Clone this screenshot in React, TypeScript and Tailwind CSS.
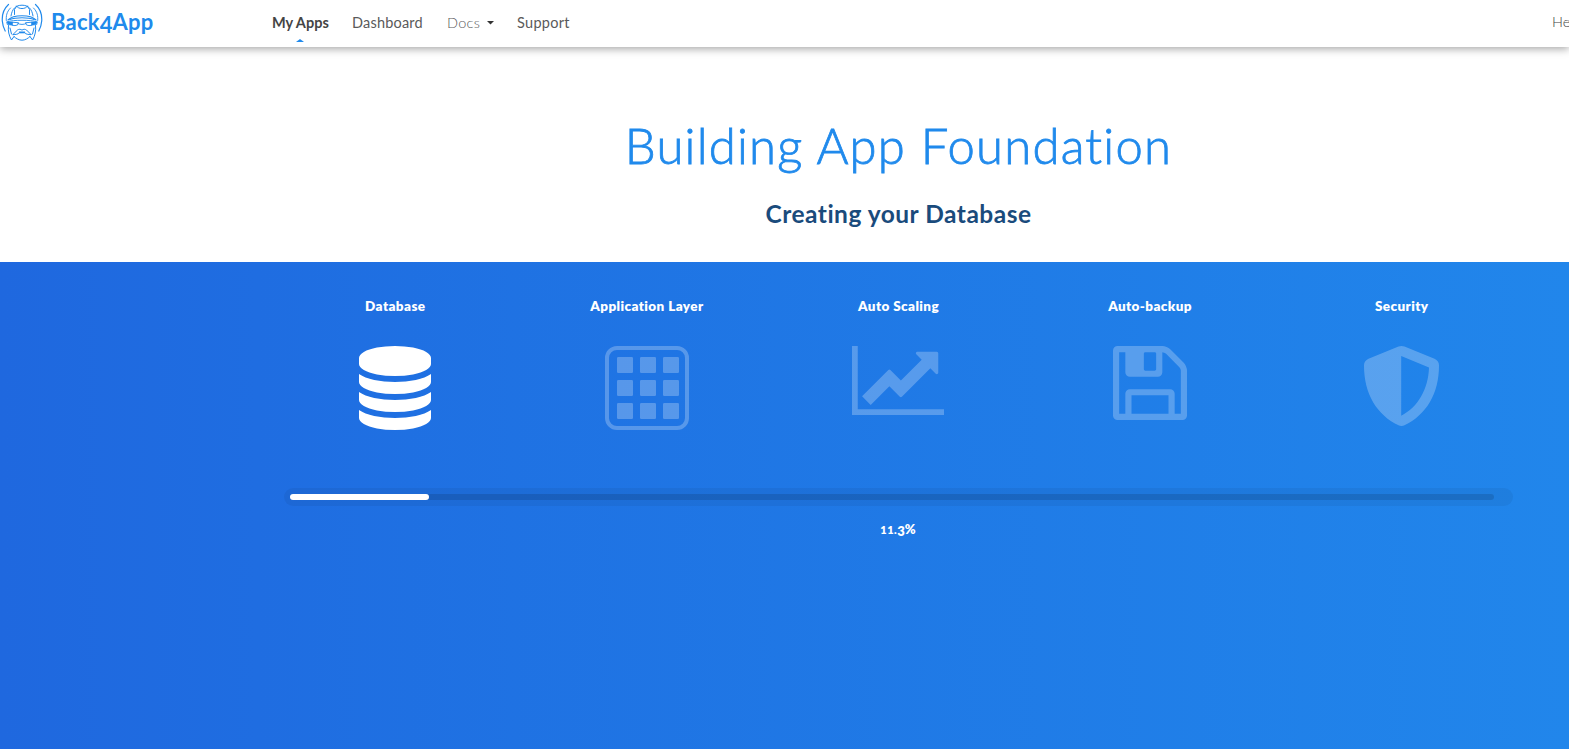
import type { ReactNode } from "react";

function Logo() {
  return (
    <svg width="42" height="38" viewBox="0 0 42 38" fill="none" stroke="#208aec" strokeLinecap="round" strokeLinejoin="round">
      <path strokeWidth="1" d="M10 13C11 6 14.500 2.200 21 2.200S31 6 32 13M13.500 11.500V6.500l2-3M28.500 11.500V6.500l-2-3M15.500 3c1.500 3.500 9.500 3.500 11 0" />
      <path strokeWidth="1.200" d="M7.500 1.500C2.500 6 .9 12 1.300 18c.3 4 1.200 7 2.900 10M34.500 1.500c5 4.500 6.600 10.500 6.200 16.500-.3 4-1.200 7-2.900 10" />
      <path strokeWidth="0.900" d="M9.500 5C5.500 9 5 13 5.300 17.500M32.500 5c4 4 4.500 8 4.200 12.500" />
      <path strokeWidth="1.100" d="M7 17C10 13.800 15 12.700 21 12.700s11 1.100 14 4.300M9 16.500c3-1.300 7.500-1.800 12-1.800s9 .5 12 1.800" />
      <path strokeWidth="0.900" d="M6 18.800c4-1.200 9-1.500 15-1.500s11 .3 15 1.500M17 20.500c1.500 1.300 6.500 1.300 8 0" />
      <path strokeWidth="0.600" fill="#208aec" d="M6 19h5.500v3.300L6.500 21.500zM36 19h-5.500v3.300l5-.8z" />
      <path strokeWidth="0.900" d="M11.500 19.300l6 .4-1 2.300-2.500.6-2.500-.3M30.500 19.300l-6 .4 1 2.300 2.500.6 2.500-.3" />
      <path strokeWidth="1" d="M7.500 22.500c-.8 5 .5 10.500 3 14.500l2.500-3.500M34.500 22.500c.8 5-.5 10.500-3 14.500L29 33.500M13 33.500c2 2 5 3.700 8 3.700s6-1.700 8-3.700" />
      <path strokeWidth="1" d="M12 31.500l4.500-4.500c1.500-1 3-.9 4.500.1 1.500-1 3-1.100 4.500-.1l4.500 4.500M12 31.500c3 .2 5-.3 6.500-1.700h5c1.500 1.400 3.500 1.900 6.500 1.700M9 25l1.500 6M33 25l-1.500 6" />
      <path strokeWidth="1.600" d="M18.500 29.200h5" />
    </svg>
  );
}

function DatabaseIcon() {
  return (
    <svg width="72" height="84" viewBox="0 0 1536 1792" fill="currentColor">
      <path d="M768 768q237 0 443-43t325-127v170q0 69-103 128t-280 93.5-385 34.5-385-34.5-280-93.5-103-128v-170q119 84 325 127t443 43zm0 768q237 0 443-43t325-127v170q0 69-103 128t-280 93.5-385 34.5-385-34.5-280-93.5-103-128v-170q119 84 325 127t443 43zm0-384q237 0 443-43t325-127v170q0 69-103 128t-280 93.5-385 34.5-385-34.5-280-93.5-103-128v-170q119 84 325 127t443 43zm0-1152q208 0 385 34.5t280 93.5 103 128v128q0 69-103 128t-280 93.5-385 34.5-385-34.5-280-93.5-103-128v-128q0-69 103-128t280-93.500 385-34.500z" />
    </svg>
  );
}

function GridIcon() {
  const offsets = [12, 35, 58];
  return (
    <svg className="ml-[2px]" width="84" height="84" viewBox="0 0 84 84" fill="currentColor">
      <rect x="2" y="2" width="80" height="80" rx="10" fill="none" stroke="currentColor" strokeWidth="4" />
      {offsets.map((y) => offsets.map((x) => <rect key={`${x}-${y}`} x={x} y={y - 1} width="16" height="16" rx="1.300" />))}
    </svg>
  );
}

function ChartIcon() {
  return (
    <svg width="92" height="69" viewBox="0 128 2048 1536" fill="currentColor">
      <path d="M2048 1536v128h-2048v-1536h128v1408h1920zM1920 288v435q0 21-19.5 29.5t-35.5-7.5l-121-121-633 633q-10 10-23 10t-23-10l-233-233-416 416-192-192 585-585q10-10 23-10t23 10l233 233 464-464-121-121q-16-16-7.5-35.5t29.5-19.5h435q14 0 23 9t9 23z" />
    </svg>
  );
}

function SaveIcon() {
  return (
    <svg width="74" height="74" viewBox="0 128 1536 1536" fill="currentColor">
      <path d="M384 1536h768v-384h-768v384zM1280 1536h128v-896q0-14-10-38.5t-20-34.5l-281-281q-10-10-34-20t-39-10v416q0 40-28 68t-68 28h-576q-40 0-68-28t-28-68v-416h-128v1280h128v-416q0-40 28-68t68-28h832q40 0 68 28t28 68v416zM896 608v-320q0-13-9.5-22.5t-22.5-9.5h-192q-13 0-22.5 9.5t-9.5 22.5v320q0 13 9.5 22.5t22.5 9.5h192q13 0 22.5-9.5t9.5-22.5zM1536 640v928q0 40-28 68t-68 28h-1344q-40 0-68-28t-28-68v-1344q0-40 28-68t68-28h928q40 0 88 20t76 48l280 280q28 28 48 76t20 88z" />
    </svg>
  );
}

function ShieldIcon() {
  return (
    <svg width="75" height="80" viewBox="0 0 75 80" fill="currentColor">
      <path fillRule="evenodd" d="M34.500.6Q37.500-.6 40.500.6L70.500 12.800Q75 14.900 75 19.500C75 48 62 69 40.500 79.300Q37.500 80.600 34.500 79.300C13 69 0 48 0 19.500Q0 14.900 4.500 12.800ZM37.200 10V69.800C54 61.500 64.300 43 65 21.600Z" />
    </svg>
  );
}

type Step = { label: string; icon: ReactNode; active?: boolean };

const steps: Step[] = [
  { label: "Database", icon: <DatabaseIcon />, active: true },
  { label: "Application Layer", icon: <GridIcon /> },
  { label: "Auto Scaling", icon: <ChartIcon /> },
  { label: "Auto-backup", icon: <SaveIcon /> },
  { label: "Security", icon: <ShieldIcon /> },
];

export default function App() {
  return (
    <div className="flex h-[749px] w-full flex-col overflow-hidden bg-white font-['Lato','Open_Sans',sans-serif] [font-variant-ligatures:none]">
      <header className="z-10 flex h-[47px] shrink-0 items-start whitespace-nowrap bg-white shadow-[0_2px_8px_rgba(0,0,0,0.35)]">
        <div className="flex w-[272px] shrink-0 items-center pl-px pt-[2px]">
          <Logo />
          <span className="ml-[8px] text-[22px] leading-[40px] font-bold tracking-[0.2px] text-[#208aec]">
            Back<span className="relative top-[3px]">4</span>App
          </span>
        </div>
        <nav className="flex text-[14.5px] leading-[46px] text-[#5a5a5a]">
          <a className="relative w-[80px] font-bold text-[#444]">
            My Apps
            <svg className="absolute top-[39px] left-[24px]" width="8" height="3" viewBox="0 0 8 3">
              <path d="M0 3 4 0 8 3Z" fill="#208aec" />
            </svg>
          </a>
          <a className="w-[95px] tracking-[0.2px]">Dashboard</a>
          <a className="flex w-[70px] items-center font-light tracking-[0.3px]">
            Docs
            <svg className="ml-[7px]" width="7" height="4" viewBox="0 0 7 4">
              <path d="M0 0H7L3.500 3.500Z" fill="#333" />
            </svg>
          </a>
          <a className="tracking-[0.3px]">Support</a>
        </nav>
        <span className="ml-auto w-[17px] shrink-0 overflow-hidden text-[14.5px] leading-[44px] font-light text-[#444]">Help</span>
      </header>

      <section className="flex h-[215px] shrink-0 flex-col items-center whitespace-nowrap pl-[228px] pt-[68px]">
        <h1 className="text-[49px] leading-[60px] font-light tracking-[1.230px] text-[#208aec] [-webkit-text-stroke:0.8px_#208aec]">Building App Foundation</h1>
        <h2 className="mt-[24px] text-[24.5px] leading-[30px] font-bold tracking-[0.500px] text-[#1a4b7c]">Creating your Database</h2>
      </section>

      <main className="flex-1 bg-linear-to-r from-[#1f68df] to-[#2186eb] pl-[227px] text-white">
        <div className="grid grid-cols-5 px-[42px] pt-[34px]">
          {steps.map((step) => (
            <div key={step.label} className="flex h-[192px] flex-col items-center">
              <span className="pl-px text-[13.5px] leading-[20px] font-extrabold tracking-[0.400px]">{step.label}</span>
              <div className={step.active ? "mt-[30px]" : "mt-[30px] opacity-25"}>{step.icon}</div>
            </div>
          ))}
        </div>
        <div className="ml-[57px] h-[18px] w-[1229px] rounded-full bg-black/5 py-[6px] pr-[19px] pl-[6px]">
          <div className="h-[6px] rounded-full bg-black/12">
            <div className="h-full w-[139px] rounded-full bg-white" />
          </div>
        </div>
        <p className="mt-[13px] text-center text-[13px] leading-[20px] font-extrabold">
          <span className="text-[11px] tracking-[0.5px]">11.</span>
          <span className="relative top-[2px]">3</span>%
        </p>
      </main>
    </div>
  );
}
